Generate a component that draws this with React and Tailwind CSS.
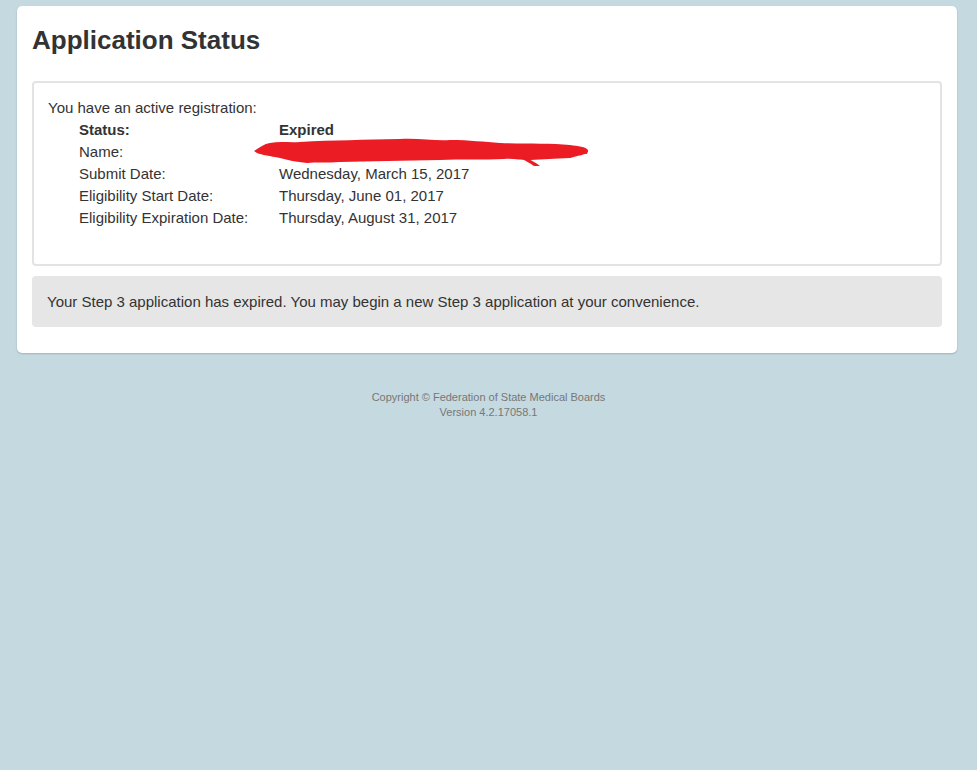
import React from 'react';

const rows = [
  { label: 'Status:', value: 'Expired', bold: true },
  { label: 'Name:', value: '', redacted: true },
  { label: 'Submit Date:', value: 'Wednesday, March 15, 2017' },
  { label: 'Eligibility Start Date:', value: 'Thursday, June 01, 2017' },
  { label: 'Eligibility Expiration Date:', value: 'Thursday, August 31, 2017' },
];

// red marker scribble over the name
const Scribble = () => (
  <svg
    className="absolute left-[-25px] top-[-4px] pointer-events-none"
    width="336"
    height="30"
    viewBox="0 0 336 30"
  >
    <path
      d="M0 14 C6 10 10 7 16 6 C26 4 36 6 46 5 C80 3 110 3 146 2 C166 1 180 4 196 3 C216 3 230 5 246 6 C270 7 296 6 316 8 C324 9 332 10 334 13 C334 16 331 17 328 18 C322 19 320 20 316 21 C300 22 290 22 276 23 C266 23 258 21 250 22 C230 23 206 22 186 23 C150 24 116 24 86 25 C72 26 62 25 53 26 C42 25 34 23 26 21 C16 19 8 18 3 16 Z"
      fill="#ec1c24"
    />
    <path d="M270 20 C276 22 282 26 286 29 L280 29 C276 26 272 24 268 22 Z" fill="#ec1c24" />
    <path d="M310 11 C318 12 328 13 334 14 L333 17 C324 16 316 15 308 14 Z" fill="#ec1c24" />
  </svg>
);

const App = () => {
  return (
    <div className="min-h-[770px] bg-[#c5d9e0] pt-[6px] text-[#333] font-['Liberation_Sans',Arial,sans-serif]">
      <div className="ml-[17px] w-[940px] bg-white rounded-[5px] shadow-[0_1px_2px_rgba(0,0,0,0.18)] px-[15px] pt-[20px] pb-[26px]">
        <h2 className="text-[26px] leading-[29px] font-bold text-[#333]">Application Status</h2>

        <div className="mt-[26px] border-2 border-[#e3e3e3] rounded-[4px] px-[14px] pt-[14px] pb-[35px] text-[15px] leading-[22px]">
          <p>You have an active registration:</p>
          <div className="pl-[31px]">
            {rows.map((r) => (
              <div key={r.label} className="flex">
                <div className={`w-[200px] ${r.bold ? 'font-bold' : ''}`}>{r.label}</div>
                <div className={`relative flex-1 ${r.bold ? 'font-bold' : ''}`}>
                  {r.value}
                  {r.redacted && (
                    <>
                      &nbsp;
                      <Scribble />
                    </>
                  )}
                </div>
              </div>
            ))}
          </div>
        </div>

        <div className="mt-[10px] bg-[#e6e6e6] rounded-[4px] px-[15px] py-[15px] text-[15px] leading-[21px]">
          Your Step 3 application has expired. You may begin a new Step 3 application at your convenience.
        </div>
      </div>

      <div className="mt-[37px] text-center text-[11px] leading-[15px] text-[#777]">
        <p>Copyright © Federation of State Medical Boards</p>
        <p>Version 4.2.17058.1</p>
      </div>
    </div>
  );
};

export default App;
